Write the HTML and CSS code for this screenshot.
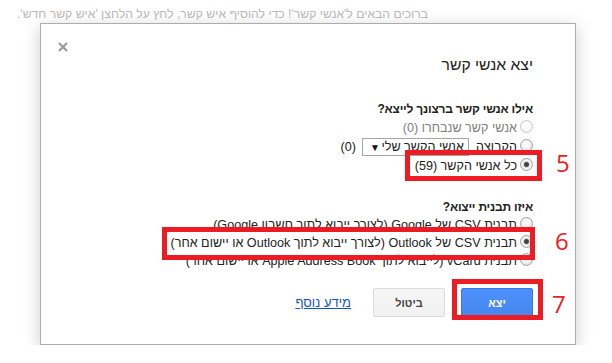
FILE: index.html
```html
<!DOCTYPE html>
<html lang="he" dir="rtl">
<head>
  <meta charset="UTF-8" />
  <title>יצא אנשי קשר</title>
  <link rel="stylesheet" href="styles.css">
</head>
<body>
  <!-- Welcome message behind the dialog -->
  <div class="welcome">ברוכים הבאים ל'אנשי קשר'! כדי להוסיף איש קשר, לחץ על הלחצן 'איש קשר חדש'.</div>

  <!-- Export dialog -->
  <div class="dialog">
    <div class="close-row">
      <span class="close-btn">
        <svg width="10" height="10" viewBox="0 0 10 10"><path d="M1 1 L9 9 M9 1 L1 9" stroke="#9a9a9a" stroke-width="2.2"/></svg>
      </span>
    </div>
    <div class="dialog-title">יצא אנשי קשר</div>

    <div class="section-title">אילו אנשי קשר ברצונך לייצא?</div>
    <label class="option disabled"><input type="radio" name="who" disabled>אנשי קשר שנבחרו (0)</label>
    <label class="option option-group">
      <input type="radio" name="who">
      <span class="group-label">הקבוצה</span>
      <span class="select-box"><span>אנשי הקשר שלי</span><span class="arrow">▼</span></span>
      <span>(0)</span>
    </label>
    <label class="option"><input type="radio" name="who" checked>כל אנשי הקשר (59)</label>

    <div class="section-title second">איזו תבנית ייצוא?</div>
    <label class="option"><input type="radio" name="fmt">תבנית CSV של Google (לצורך ייבוא לתוך חשבון Google)</label>
    <label class="option"><input type="radio" name="fmt" checked>תבנית CSV של Outlook (לצורך ייבוא לתוך Outlook או יישום אחר)</label>
    <label class="option"><input type="radio" name="fmt">תבנית vCard (לייבוא לתוך Apple Address Book או יישום אחר)</label>

    <div class="buttons">
      <button class="btn btn-primary">יצא</button>
      <button class="btn">ביטול</button>
      <a class="more-info" href="#">מידע נוסף</a>
    </div>

    <!-- Red annotation marks -->
    <div class="mark mark-5"></div>
    <div class="mark-num num-5">5</div>
    <div class="mark mark-6"></div>
    <div class="mark-num num-6">6</div>
    <div class="mark mark-7"></div>
    <div class="mark-num num-7">7</div>
  </div>
</body>
</html>
```

FILE: styles.css
```css
body {
  margin: 0;
  background: #fff;
  font-family: "Liberation Sans", Arial, sans-serif;
  font-size: 12.6px;
  color: #222;
}
/* Faded page text behind the dialog */
.welcome {
  height: 23px;
  box-sizing: border-box;
  padding: 6px 184px 0 0;
  font-size: 12.2px;
  line-height: 17px;
  color: #bbb;
  white-space: nowrap;
}
/* Dialog box */
.dialog {
  position: relative;
  width: 536px;
  height: 322px;
  box-sizing: border-box;
  margin-right: 36px;
  padding: 18px 42px 0 17px;
  border: 1px solid #acacac;
  background: #fff;
  box-shadow: 0 4px 16px rgba(0, 0, 0, 0.2);
}
.close-row {
  display: flex;
  justify-content: flex-end;
  height: 10px;
}
.close-btn {
  display: block;
  width: 10px;
  height: 10px;
}
.close-btn svg {
  display: block;
}
.dialog-title {
  margin-top: 3px;
  font-size: 15.7px;
  line-height: 20px;
  color: #222;
}
.section-title {
  margin-top: 25px;
  margin-bottom: 1px;
  font-size: 12px;
  font-weight: bold;
  letter-spacing: -0.2px;
  line-height: 18px;
}
.section-title.second {
  margin-top: 23px;
  margin-bottom: 0;
}
/* Radio rows */
.option {
  display: flex;
  align-items: center;
  height: 18px;
  white-space: nowrap;
}
.option.option-group {
  height: 20px;
}
.option.disabled {
  color: #808080;
}
.option input {
  appearance: none;
  width: 13px;
  height: 13px;
  margin: 0 0 3px 3px;
  border: 1px solid #a2a2a2;
  border-radius: 50%;
  box-sizing: border-box;
  background: radial-gradient(circle at 45% 40%, #fff 0, #f2f2f2 45%, #d8d8d8 100%);
}
.option input:checked {
  background: radial-gradient(circle, #3c3c3c 0, #4a4a4a 2px, #d6d6d6 3px, #f4f4f4 4px, #e0e0e0 100%);
}
.option input:disabled {
  border-color: #c8c8c8;
  background: radial-gradient(circle at 45% 40%, #fff 0, #f6f6f6 60%, #e8e8e8 100%);
}
.group-label {
  margin-left: 7px;
}
.select-box {
  display: flex;
  align-items: center;
  justify-content: space-between;
  width: 107px;
  height: 18px;
  box-sizing: border-box;
  padding: 0 4px 0 7px;
  margin-left: 6px;
  border: 1px solid #a5a5a5;
  background: #fff;
}
.select-box .arrow {
  font-size: 10px;
  color: #111;
}
/* Buttons */
.buttons {
  display: flex;
  align-items: center;
  margin-top: 18px;
}
.btn {
  width: 72px;
  height: 29px;
  border: 1px solid #dcdcdc;
  border-radius: 2px;
  background: linear-gradient(#f5f5f5, #f1f1f1);
  color: #444;
  font-family: "Liberation Sans", Arial, sans-serif;
  font-size: 11px;
  font-weight: bold;
  margin-left: 16px;
  padding: 0;
}
.btn-primary {
  border-color: #3079ed;
  background: linear-gradient(#4d90fe, #4787ed);
  color: #fff;
}
.more-info {
  margin-right: 6px;
  font-size: 13px;
  color: #15c;
  text-decoration: underline;
}
/* Red highlight annotations drawn over the screenshot */
.mark {
  position: absolute;
  box-sizing: border-box;
  border: 5px solid #ed1c24;
}
.mark-5 { left: 364px; top: 126px; width: 137px; height: 31px; }
.mark-6 { left: 121px; top: 203px; width: 373px; height: 33px; }
.mark-7 { left: 411px; top: 255px; width: 91px; height: 41px; }
.mark-num {
  position: absolute;
  font-family: "Open Sans", sans-serif;
  font-size: 24px;
  line-height: 24px;
  color: #ed1c24;
}
.num-5 { left: 515px; top: 127px; }
.num-6 { left: 514px; top: 205px; }
.num-7 { left: 511px; top: 268px; }
```
